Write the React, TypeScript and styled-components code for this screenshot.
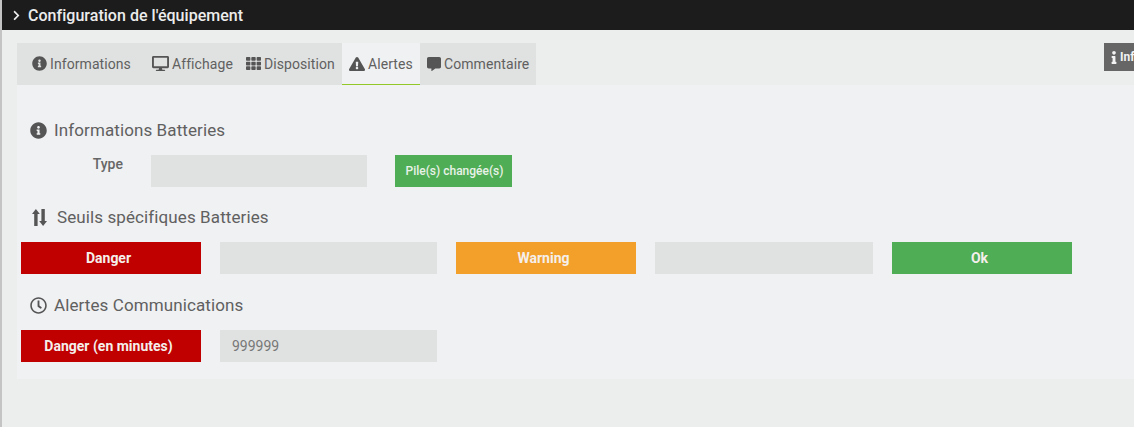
import React from "react";
import styled, { createGlobalStyle } from "styled-components";
import {
  FaChevronRight,
  FaCommentAlt,
  FaDesktop,
  FaExclamationTriangle,
  FaInfo,
  FaInfoCircle,
  FaRegClock,
  FaTh,
} from "react-icons/fa";

const GlobalStyle = createGlobalStyle`
  html, body {
    margin: 0;
    padding: 0;
    background: #eceeee;
    overflow: hidden;
  }
  * {
    box-sizing: border-box;
  }
`;

const Page = styled.div`
  width: 1134px;
  height: 427px;
  overflow: hidden;
  border-left: 2px solid #c4c4c4;
  background: #eceeee;
  font-family: Roboto, "Liberation Sans", sans-serif;
  color: #555;
`;

const Header = styled.header`
  height: 30px;
  background: #1c1c1c;
  color: #ececec;
  display: flex;
  align-items: center;
  gap: 7px;
  padding-left: 10px;
  font-size: 16px;
  font-weight: 500;
  letter-spacing: 0.03px;
  svg {
    width: 9px;
    height: 11px;
  }
`;

const Content = styled.div`
  padding: 13px 0 0 15px;
`;

const TabBar = styled.div`
  display: flex;
  height: 42px;
`;

const Tabs = styled.nav`
  display: flex;
  height: 42px;
  background: #e0e2e1;
`;

const Tab = styled.div<{ $active?: boolean; $width: number; $first?: boolean; $icon?: number }>`
  width: ${(p) => p.$width}px;
  display: flex;
  align-items: center;
  gap: 3px;
  padding-left: ${(p) => (p.$first ? 15 : 7)}px;
  font-size: 14px;
  letter-spacing: 0.08px;
  color: #606060;
  white-space: nowrap;
  background: ${(p) => (p.$active ? "#f0f1f3" : "transparent")};
  border-bottom: 1px solid ${(p) => (p.$active ? "#93c927" : "transparent")};
  svg {
    flex: none;
    font-size: ${(p) => p.$icon ?? 14}px;
    color: #555;
  }
`;

const InfoButton = styled.div`
  margin: 0 -20px 0 auto;
  width: 50px;
  height: 28px;
  background: #666;
  color: #f2f2f2;
  display: flex;
  align-items: center;
  gap: 3px;
  padding-left: 7px;
  font-size: 12px;
  font-weight: 700;
  overflow: hidden;
  svg {
    flex: none;
    width: 6px;
    height: 13px;
  }
`;

const Panel = styled.section`
  height: 294px;
  background: #f0f1f3;
  padding: 33px 0 0 4px;
`;

const SectionTitle = styled.h3<{ $gap?: number }>`
  margin: 0;
  height: 24px;
  display: flex;
  align-items: center;
  gap: ${(p) => p.$gap ?? 7}px;
  padding-left: ${(p) => (p.$gap ? 11 : 9)}px;
  font-size: 17px;
  font-weight: 400;
  letter-spacing: 0.1px;
  color: #606060;
  svg {
    flex: none;
    width: 17px;
    height: 17px;
    color: #555;
  }
`;

const TypeRow = styled.div`
  display: flex;
  align-items: flex-start;
  margin: 13px 0 18px;
  height: 32px;
`;

const TypeLabel = styled.label`
  width: 130px;
  padding: 1px 28px 0 0;
  text-align: right;
  font-size: 14px;
  font-weight: 500;
  color: #666;
`;

const Field = styled.div`
  height: 32px;
  background: #e0e2e1;
  color: #777;
  font-size: 14px;
  line-height: 32px;
  padding-left: 12px;
`;

const TypeField = styled(Field)`
  width: 216px;
  margin-right: 28px;
`;

const ChangedButton = styled.button`
  width: 117px;
  height: 32px;
  border: 0;
  padding: 0 0 0 2px;
  background: #4fad55;
  color: #e8f2e8;
  font-family: inherit;
  font-size: 12px;
  font-weight: 500;
`;

const FieldGrid = styled.div`
  display: grid;
  grid-template-columns: 180px 217px 180px 218px 180px;
  column-gap: 19px;
  margin: 13px 0 19px;
`;

const Level = styled.div<{ $color: string }>`
  height: 32px;
  background: ${(p) => p.$color};
  color: #f5efec;
  display: flex;
  align-items: center;
  justify-content: center;
  padding-right: 5px;
  font-size: 14px;
  font-weight: 700;
`;

const SortArrows = () => (
  <svg viewBox="0 0 17 17" fill="currentColor">
    <path d="M3.9 0 7.8 5H5.6v12H2.2V5H0z" />
    <path d="M11.1 17 7.2 12h2.2V0h3.4v12H15z" />
  </svg>
);

export default function App() {
  return (
    <>
      <GlobalStyle />
      <Page>
        <Header>
          <FaChevronRight />
          Configuration de l'équipement
        </Header>
        <Content>
          <TabBar>
            <Tabs>
              <Tab $first $width={128} $icon={15}>
                <FaInfoCircle />
                Informations
              </Tab>
              <Tab $width={94} $icon={17}>
                <FaDesktop />
                Affichage
              </Tab>
              <Tab $width={103} $icon={15}>
                <FaTh />
                Disposition
              </Tab>
              <Tab $active $width={78} $icon={16}>
                <FaExclamationTriangle />
                Alertes
              </Tab>
              <Tab $width={116}>
                <FaCommentAlt />
                Commentaire
              </Tab>
            </Tabs>
            <InfoButton>
              <FaInfo />
              Informations
            </InfoButton>
          </TabBar>
          <Panel>
            <SectionTitle>
              <FaInfoCircle />
              Informations Batteries
            </SectionTitle>
            <TypeRow>
              <TypeLabel>Type</TypeLabel>
              <TypeField />
              <ChangedButton>Pile(s) changée(s)</ChangedButton>
            </TypeRow>
            <SectionTitle $gap={8}>
              <SortArrows />
              Seuils spécifiques Batteries
            </SectionTitle>
            <FieldGrid>
              <Level $color="#c00000">Danger</Level>
              <Field />
              <Level $color="#f2a029">Warning</Level>
              <Field />
              <Level $color="#4fad55">Ok</Level>
            </FieldGrid>
            <SectionTitle>
              <FaRegClock />
              Alertes Communications
            </SectionTitle>
            <FieldGrid>
              <Level $color="#c00000">Danger (en minutes)</Level>
              <Field>999999</Field>
            </FieldGrid>
          </Panel>
        </Content>
      </Page>
    </>
  );
}
